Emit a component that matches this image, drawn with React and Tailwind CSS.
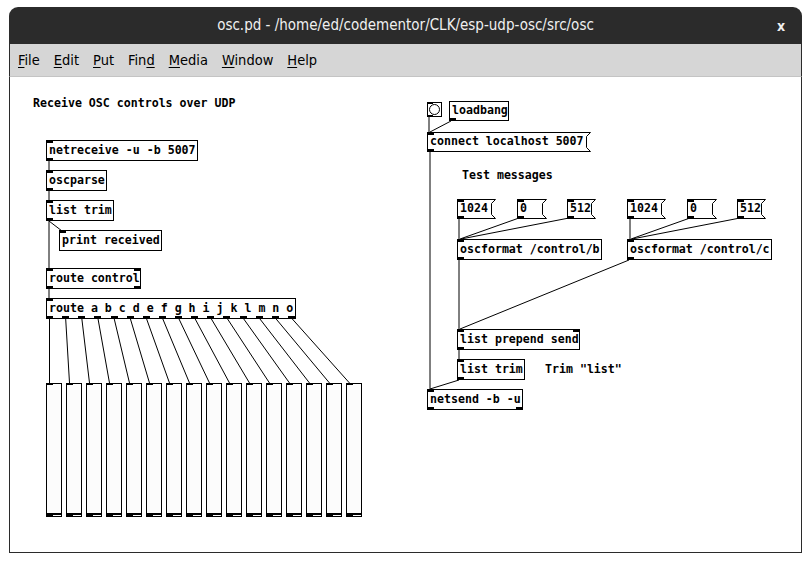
import React from 'react';

// canvas origin in page coordinates
const OX = 10;
const OY = 77;

const mono = "font-['DejaVu_Sans_Mono',monospace] font-bold text-[11.6px] text-black";

function Obj({ x, y, w, h = 21, text, ins = 1, outs = 1 }) {
  return (
    <div
      className={`absolute border border-black bg-white flex items-center pl-[2px] whitespace-pre ${mono}`}
      style={{ left: x - OX, top: y - OY, width: w, height: h }}
    >
      {text}
      {ins >= 1 && <div className="absolute -top-px -left-px w-[7px] h-[3px] bg-black" />}
      {ins >= 2 && <div className="absolute -top-px -right-px w-[7px] h-[3px] bg-black" />}
      {outs >= 1 && <div className="absolute -bottom-px -left-px w-[7px] h-[3px] bg-black" />}
      {outs >= 2 && <div className="absolute -bottom-px -right-px w-[7px] h-[3px] bg-black" />}
    </div>
  );
}

function Msg({ x, y, w, h = 20, text }) {
  return (
    <div
      className={`absolute flex items-center pl-[3px] whitespace-pre ${mono}`}
      style={{ left: x - OX, top: y - OY, width: w + 5, height: h }}
    >
      <svg className="absolute inset-0" width={w + 5} height={h}>
        <polygon
          points={`0.5,0.5 ${w + 4.5},0.5 ${w + 0.5},4.5 ${w + 0.5},${h - 4.5} ${w + 4.5},${h - 0.5} 0.5,${h - 0.5}`}
          fill="white"
          stroke="black"
          strokeWidth="1"
        />
      </svg>
      <span className="relative">{text}</span>
      <div className="absolute top-0 left-0 w-[7px] h-[3px] bg-black" />
      <div className="absolute bottom-0 left-0 w-[7px] h-[3px] bg-black" />
    </div>
  );
}

function Comment({ x, y, text }) {
  return (
    <div
      className={`absolute whitespace-pre leading-none ${mono}`}
      style={{ left: x - OX, top: y - OY }}
    >
      {text}
    </div>
  );
}

function Slider({ x }) {
  return (
    <div
      className="absolute border border-black bg-[#fcfcfc]"
      style={{ left: x - OX, top: 383 - OY, width: 16, height: 134 }}
    >
      <div className="absolute -top-px -left-px w-[7px] h-[2px] bg-black" />
      <div className="absolute bottom-[1px] left-0 right-0 h-[2px] bg-black" />
      <div className="absolute -bottom-px -left-px w-[7px] h-[4px] bg-black" />
    </div>
  );
}

const wires = [
  [49, 161, 49, 170],
  [49, 191, 49, 200],
  [49, 221, 49, 269],
  [49, 221, 62, 231],
  [49, 289, 49, 298],
  ...Array.from({ length: 16 }, (_, i) => [49.5 + 16.13 * i, 318, 49.5 + 20 * i, 383]),
  [429, 117, 429, 132],
  [451, 121, 430, 132],
  [430, 152, 430, 389],
  [459, 218, 459, 239],
  [519, 218, 460, 239],
  [569, 218, 461, 239],
  [630, 218, 630, 239],
  [690, 218, 631, 239],
  [740, 218, 632, 239],
  [459, 260, 459, 329],
  [629, 260, 460, 329],
  [459, 350, 459, 359],
  [459, 380, 430, 389],
];

const menu = [
  ['F', 'ile'],
  ['E', 'dit'],
  ['P', 'ut'],
  ['Fin', 'd', ''],
  ['M', 'edia'],
  ['W', 'indow'],
  ['H', 'elp'],
];

export default function App() {
  return (
    <div className="w-[811px] h-[563px] bg-white pt-[7px] pl-[9px]">
      <div className="w-[793px] h-[546px] flex flex-col">
        {/* title bar */}
        <div className="h-[37px] bg-[#2b2b2b] rounded-t-[9px] relative flex items-center justify-center text-[#f0f0f0] text-[15px] font-['DejaVu_Sans_Condensed','DejaVu_Sans',sans-serif] font-stretch-condensed">
          <span>osc.pd - /home/ed/codementor/CLK/esp-udp-osc/src/osc</span>
          <span className="absolute right-[17px] top-[9px] text-[14px] font-bold">x</span>
        </div>
        {/* menu bar */}
        <div className="h-[33px] bg-[#d6d6d6] border-x border-[#2b2b2b] border-b border-b-[#c4c4c4] flex items-center gap-[14px] pl-[8px] pt-[2px] text-[14.5px] text-black font-['DejaVu_Sans_Condensed','DejaVu_Sans',sans-serif] font-stretch-condensed">
          {menu.map((m, i) =>
            m.length === 3 ? (
              <span key={i}>
                {m[0]}
                <span className="underline underline-offset-2">{m[1]}</span>
              </span>
            ) : (
              <span key={i}>
                <span className="underline underline-offset-2">{m[0]}</span>
                {m[1]}
              </span>
            )
          )}
        </div>
        {/* patch canvas */}
        <div className="flex-1 bg-white border-x border-b border-[#2b2b2b] relative overflow-hidden">
          <svg className="absolute inset-0" width="791" height="476">
            <g transform={`translate(${-OX},${-OY})`} stroke="black" strokeWidth="1">
              {wires.map((w, i) => (
                <line key={i} x1={w[0]} y1={w[1]} x2={w[2]} y2={w[3]} />
              ))}
            </g>
          </svg>

          <Comment x={33} y={98} text="Receive OSC controls over UDP" />
          <Obj x={46} y={140} w={152} text="netreceive -u -b 5007" />
          <Obj x={46} y={170} w={61} text="oscparse" />
          <Obj x={46} y={200} w={68} text="list trim" />
          <Obj x={59} y={230} w={103} text="print received" outs={0} />
          <Obj x={46} y={268} w={95} text="route control" ins={2} outs={2} />
          <div
            className={`absolute border border-black bg-white flex items-center pl-[2px] whitespace-pre ${mono}`}
            style={{ left: 46 - OX, top: 298 - OY, width: 250, height: 21 }}
          >
            route a b c d e f g h i j k l m n o
            <div className="absolute -top-px -left-px w-[7px] h-[3px] bg-black" />
            {Array.from({ length: 16 }, (_, i) => (
              <div
                key={i}
                className="absolute -bottom-px w-[7px] h-[3px] bg-black"
                style={{ left: -1 + 16.13 * i }}
              />
            ))}
          </div>
          {Array.from({ length: 16 }, (_, i) => (
            <Slider key={i} x={46 + 20 * i} />
          ))}

          {/* bang */}
          <div
            className="absolute border border-black bg-white flex items-center justify-center"
            style={{ left: 427 - OX, top: 102 - OY, width: 15, height: 15 }}
          >
            <div className="w-[11px] h-[11px] rounded-full border border-black" />
            <div className="absolute -top-px -left-px w-[6px] h-[2px] bg-black" />
            <div className="absolute -bottom-px -left-px w-[6px] h-[2px] bg-black" />
          </div>
          <Obj x={449} y={101} w={60} h={20} text="loadbang" ins={0} />
          <Msg x={427} y={132} w={159} text="connect localhost 5007" />
          <Comment x={462} y={170} text="Test messages" />

          <Msg x={457} y={199} w={34} text="1024" />
          <Msg x={517} y={199} w={25} text="0" />
          <Msg x={567} y={199} w={24} text="512" />
          <Msg x={627} y={199} w={34} text="1024" />
          <Msg x={687} y={199} w={25} text="0" />
          <Msg x={737} y={199} w={24} text="512" />

          <Obj x={457} y={239} w={145} text="oscformat /control/b" />
          <Obj x={627} y={239} w={145} text="oscformat /control/c" />
          <Obj x={457} y={329} w={123} text="list prepend send" ins={2} />
          <Obj x={457} y={359} w={68} text="list trim" />
          <Comment x={545} y={364} text={'Trim "list"'} />
          <Obj x={427} y={389} w={96} text="netsend -b -u" outs={2} />
        </div>
      </div>
    </div>
  );
}
